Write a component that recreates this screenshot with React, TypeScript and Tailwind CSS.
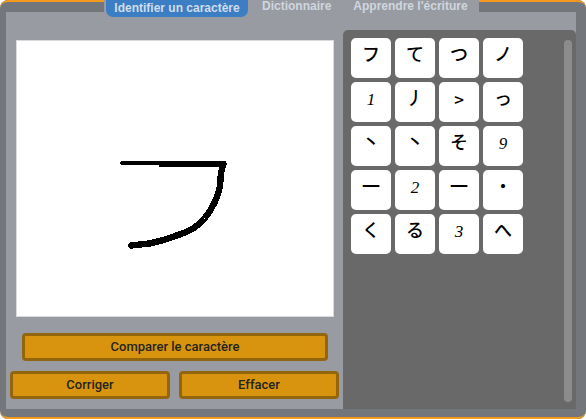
const glyphs: { c: string; latin?: boolean; big?: boolean }[] = [
  { c: "フ" }, { c: "て" }, { c: "つ" }, { c: "ノ" },
  { c: "1", latin: true }, { c: "丿" }, { c: ">", big: true }, { c: "っ" },
  { c: "丶" }, { c: "丶" }, { c: "そ" }, { c: "9", latin: true },
  { c: "一" }, { c: "2", latin: true }, { c: "一" }, { c: "・" },
  { c: "く" }, { c: "る" }, { c: "3", latin: true }, { c: "へ" },
];

function GlyphCell({ c, latin, big }: { c: string; latin?: boolean; big?: boolean }) {
  let cls =
    "w-10 h-10 rounded-[5px] bg-white flex items-center justify-center text-black text-[18px] font-medium leading-none pb-[10px] font-['Noto_Sans_CJK_JP',sans-serif]";
  if (latin) {
    cls =
      "w-10 h-10 rounded-[5px] bg-white flex items-center justify-center text-black text-[17px] italic leading-none pb-[5px] font-['Liberation_Serif',serif]";
  } else if (big) {
    cls =
      "w-10 h-10 rounded-[5px] bg-white flex items-center justify-center text-black text-[17px] font-medium leading-none pb-[8px] font-['Noto_Sans_CJK_JP',sans-serif]";
  }
  return <button className={cls}>{c}</button>;
}

function ActionButton({ label, className }: { label: string; className: string }) {
  return (
    <button
      className={
        "h-7 rounded-[4px] border-[3px] border-[#93650c] bg-[#d9940f] text-[#24241e] text-[13px] font-medium font-['Roboto',sans-serif] flex items-center justify-center " +
        className
      }
    >
      {label}
    </button>
  );
}

export default function App() {
  return (
    <div className="w-[586px] h-[419px] bg-[#73767a] flex flex-col overflow-hidden rounded-lg">
      {/* top edge with tabs */}
      <div className="h-3 flex shrink-0">
        <div className="w-[104px] h-3 border-t-2 border-[#f39a1f] rounded-tl-lg" />
        <div className="w-[375px] h-[18px] bg-[#989ba1] flex items-start pl-[2px] gap-[14px] relative z-10 font-['Liberation_Sans',sans-serif] text-xs font-bold text-[#d0d6df]">
          <div className="w-[142px] h-[17px] bg-[#3c7ec3] rounded-b-[7px] flex items-center justify-center pb-[2px] text-[#cfdcec]">
            Identifier un caractère
          </div>
          <div className="h-[13px] leading-[12px]">Dictionnaire</div>
          <div className="h-[13px] leading-[12px] ml-2">Apprendre l'écriture</div>
        </div>
        <div className="flex-1 h-3 border-t-2 border-[#f39a1f] rounded-tr-lg" />
      </div>

      {/* body */}
      <div className="mx-[10px] ml-[6px] h-[397px] flex bg-[#989ba1] shrink-0">
        <div className="w-[337px] shrink-0 flex flex-col pt-7 pl-1">
          <div className="ml-[6px] w-[318px] h-[277px] bg-white border border-[#d9dbde]">
            <svg viewBox="17.5 40.5 316 275" className="w-[316px] h-[275px] block" shapeRendering="crispEdges">
              <path d="M123 162.5 L163 162.5" stroke="#000" strokeWidth="4.6" fill="none" strokeLinecap="round" />
              <path
                d="M162 163.5 L224 163.5 L221.5 172 L220.5 186 C218 198 213 208 205 218 C198 226 190 231 180 234 C170 238 160 241 150 243 L132 245"
                stroke="#000"
                strokeWidth="6.4"
                fill="none"
                strokeLinecap="round"
                strokeLinejoin="round"
              />
            </svg>
          </div>
          <div className="ml-3 mt-4">
            <ActionButton label="Comparer le caractère" className="w-[306px]" />
          </div>
          <div className="mt-[10px] flex gap-[9px]">
            <ActionButton label="Corriger" className="w-40" />
            <ActionButton label="Effacer" className="w-40" />
          </div>
        </div>
        <div className="flex-1 bg-[#696969] rounded-t-[5px] mt-[18px] flex justify-between pl-2 pr-1">
          <div className="grid grid-cols-[repeat(4,40px)] auto-rows-[40px] gap-1 pt-2 h-fit">
            {glyphs.map((g, i) => (
              <GlyphCell key={i} c={g.c} latin={g.latin} big={g.big} />
            ))}
          </div>
          <div className="w-2 h-[362px] mt-[10px] rounded-[4px] bg-[#8c8c8c]" />
        </div>
      </div>

      {/* bottom edge */}
      <div className="flex-1 border-b-2 border-[#f39a1f] rounded-b-lg" />
    </div>
  );
}
